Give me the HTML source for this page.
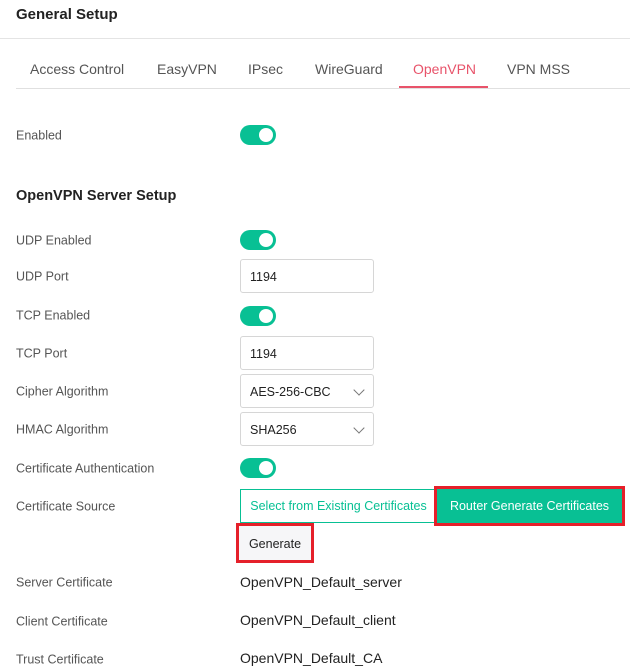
<!DOCTYPE html>
<html><head><style>
body{margin:0;width:630px;height:670px;overflow:hidden;background:#fff;font-family:"Liberation Sans",sans-serif;position:relative}
.a{position:absolute}
.lbl{position:absolute;left:16px;font-size:12.5px;color:#555;transform:translateY(-40%)}
.tog{position:absolute;left:240px;width:36px;height:20px;border-radius:10px;background:#08c094}
.tog::after{content:"";position:absolute;right:3px;top:3px;width:14px;height:14px;border-radius:50%;background:#fff}
.inp{position:absolute;left:240px;width:132px;height:32px;border:1px solid #d6d6d6;border-radius:3px;font-size:12.5px;color:#222;line-height:32px;padding-left:9px;box-sizing:border-box}
.chev{position:absolute;right:10px;top:11px;width:7px;height:7px;border-right:1px solid #777;border-bottom:1px solid #777;transform:rotate(45deg)}
.val{position:absolute;left:240px;font-size:14px;color:#222;transform:translateY(-45%)}
.tab{position:absolute;top:61px;font-size:14px;color:#555}
</style></head><body>
<div class="a" style="left:16px;top:6px;font-size:15px;font-weight:bold;color:#222">General Setup</div>
<div class="a" style="left:0;top:38px;width:630px;height:1px;background:#e4e4e4"></div>
<div class="tab" style="left:30px">Access Control</div>
<div class="tab" style="left:157px">EasyVPN</div>
<div class="tab" style="left:248px">IPsec</div>
<div class="tab" style="left:315px">WireGuard</div>
<div class="tab" style="left:413px;color:#e8536a">OpenVPN</div>
<div class="tab" style="left:507px">VPN MSS</div>
<div class="a" style="left:16px;top:88px;width:614px;height:1px;background:#e0e0e0"></div>
<div class="a" style="left:399px;top:86px;width:89px;height:2px;background:#e8536a"></div>
<div class="lbl" style="top:134px">Enabled</div><div class="tog" style="top:125px"></div>
<div class="a" style="left:16px;top:188px;font-size:14.5px;font-weight:bold;color:#222">OpenVPN Server Setup</div>
<div class="lbl" style="top:239px">UDP Enabled</div><div class="tog" style="top:230px"></div>
<div class="lbl" style="top:275px">UDP Port</div><div class="inp" style="top:259px;width:134px;height:34px;line-height:34px">1194</div>
<div class="lbl" style="top:314px">TCP Enabled</div><div class="tog" style="top:306px"></div>
<div class="lbl" style="top:352px">TCP Port</div><div class="inp" style="top:336px;width:134px;height:34px;line-height:34px">1194</div>
<div class="lbl" style="top:390px">Cipher Algorithm</div><div class="inp" style="top:374px;width:134px;height:34px;line-height:34px">AES-256-CBC<span class="chev"></span></div>
<div class="lbl" style="top:428px">HMAC Algorithm</div><div class="inp" style="top:412px;width:134px;height:34px;line-height:34px">SHA256<span class="chev"></span></div>
<div class="lbl" style="top:467px">Certificate Authentication</div><div class="tog" style="top:458px"></div>
<div class="lbl" style="top:505px">Certificate Source</div>
<div class="a" style="left:240px;top:489px;width:197px;height:34px;border:1px solid #08c094;box-sizing:border-box;color:#08c094;font-size:12.5px;line-height:32px;text-align:center">Select from Existing Certificates</div>
<div class="a" style="left:434px;top:486px;width:191px;height:40px;border:3px solid #e5202a;box-sizing:border-box;background:#08c094;color:#fff;font-size:12.5px;line-height:34px;text-align:center">Router Generate Certificates</div>
<div class="a" style="left:236px;top:523px;width:78px;height:40px;border:3px solid #e5202a;box-sizing:border-box;background:#f6f6f8;color:#222;font-size:12.5px;line-height:36px;text-align:center">Generate</div>
<div class="lbl" style="top:581px">Server Certificate</div><div class="val" style="top:581px">OpenVPN_Default_server</div>
<div class="lbl" style="top:620px">Client Certificate</div><div class="val" style="top:619px">OpenVPN_Default_client</div>
<div class="lbl" style="top:658px">Trust Certificate</div><div class="val" style="top:657px">OpenVPN_Default_CA</div>
</body></html>
